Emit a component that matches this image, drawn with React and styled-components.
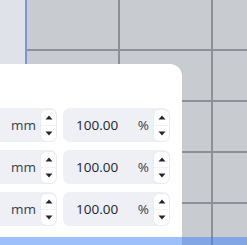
import React from 'react'
import styled, { createGlobalStyle } from 'styled-components'

const GlobalStyle = createGlobalStyle`
  html, body {
    margin: 0;
    padding: 0;
    background: #c8cbd0;
    font-family: "Open Sans", "Liberation Sans", Arial, sans-serif;
  }
`

const Page = styled.div`
  position: relative;
  width: 247px;
  height: 245px;
  overflow: hidden;
  display: flex;
`

const Sidebar = styled.div`
  width: 25px;
  flex: none;
  background: #dfe2e8;
  border-right: 2px solid #7b96d6;
`

// cells of the layout grid, 93 x 51
const Canvas = styled.div`
  flex: 1;
  background-color: #c8cbd0;
  background-image:
    linear-gradient(to right, transparent 0, transparent 91px, #8c9098 91px, #8c9098 93px),
    linear-gradient(to bottom, transparent 0, transparent 49px, #8c9098 49px, #8c9098 51px);
  background-size: 93px 51px;
  background-position: 0 0;
`

const Panel = styled.div`
  position: absolute;
  top: 64px;
  left: -58px;
  width: 240px;
  bottom: -10px;
  background: #ffffff;
  border-top-right-radius: 12px;
  box-sizing: border-box;
  padding: 44px 12px 0 0;
  display: flex;
  flex-direction: column;
  gap: 8px;
`

const Row = styled.div`
  display: flex;
  justify-content: flex-end;
  gap: 6px;
`

const Field = styled.div`
  width: 107px;
  height: 34px;
  box-sizing: border-box;
  background: #eef0f5;
  border-radius: 7px;
  display: flex;
  align-items: center;
  padding: 0 1px 0 13px;
  font-size: 13.5px;
`

const Value = styled.span`
  flex: 1;
  color: #1c2433;
`

const Unit = styled.span`
  color: #3b404a;
  margin-right: 5px;
`

const Spinner = styled.div`
  width: 15px;
  height: 31px;
  background: #ffffff;
  border-radius: 5px;
  box-shadow: 0 0 0 0.5px #e3e6ec;
  display: flex;
  flex-direction: column;
`

const StepButton = styled.div`
  flex: 1;
  display: flex;
  align-items: center;
  justify-content: center;
  & + & {
    border-top: 1px solid #f0f1f4;
  }
`

const Arrow = ({ down }) => (
  <svg width="8" height="5" viewBox="0 0 8 5">
    <polygon points={down ? '0.5,0.5 7.5,0.5 4,4.5' : '0.5,4.5 7.5,4.5 4,0.5'} fill="#222630" />
  </svg>
)

const NumberField = ({ value, unit }) => (
  <Field>
    <Value>{value}</Value>
    <Unit>{unit}</Unit>
    <Spinner>
      <StepButton><Arrow /></StepButton>
      <StepButton><Arrow down /></StepButton>
    </Spinner>
  </Field>
)

const SelectionBar = styled.div`
  position: absolute;
  left: 0;
  right: 0;
  bottom: 0;
  height: 8px;
  background: rgba(59, 130, 246, 0.5);
`

const rows = [
  { size: '', scale: '100.00' },
  { size: '', scale: '100.00' },
  { size: '', scale: '100.00' },
]

export default function App() {
  return (
    <>
      <GlobalStyle />
      <Page>
        <Sidebar />
        <Canvas />
        <Panel>
          {rows.map((r, i) => (
            <Row key={i}>
              <NumberField value={r.size} unit="mm" />
              <NumberField value={r.scale} unit="%" />
            </Row>
          ))}
        </Panel>
        <SelectionBar />
      </Page>
    </>
  )
}
